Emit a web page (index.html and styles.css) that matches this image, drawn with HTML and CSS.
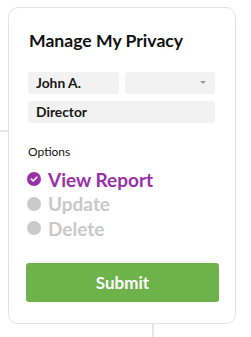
FILE: index.html
```html
<!DOCTYPE html>
<html>
<head>
<meta charset="utf-8">
<link rel="stylesheet" href="styles.css">
</head>
<body>
<div class="line-h"></div>
<div class="card">
  <h1 class="title">Manage My Privacy</h1>
  <div class="fields">
    <div class="row">
      <div class="input">John A.</div>
      <div class="input select"><span class="caret"></span></div>
    </div>
    <div class="input">Director</div>
  </div>
  <div class="label">Options</div>
  <ul class="options">
    <li class="opt active">
      <svg class="ico" viewBox="0 0 14 14" width="14" height="14"><circle cx="7" cy="7" r="7" fill="#9a2fa8"/><path d="M4.3 7.2 L6.2 9 L9.8 5.2" fill="none" stroke="#fff" stroke-width="1.6" stroke-linecap="round" stroke-linejoin="round"/></svg>
      <span>View Report</span>
    </li>
    <li class="opt">
      <svg class="ico" viewBox="0 0 14 14" width="14" height="14"><circle cx="7" cy="7" r="7" fill="#cacaca"/></svg>
      <span>Update</span>
    </li>
    <li class="opt">
      <svg class="ico" viewBox="0 0 14 14" width="14" height="14"><circle cx="7" cy="7" r="7" fill="#cacaca"/></svg>
      <span>Delete</span>
    </li>
  </ul>
  <button class="submit">Submit</button>
</div>
<div class="line-v"></div>
</body>
</html>
```
FILE: styles.css
```css
html, body {
  margin: 0;
  padding: 0;
  background: #fff;
}
body {
  position: relative;
  width: 251px;
  height: 337px;
  overflow: hidden;
  font-family: "Lato", "Noto Sans", sans-serif;
  color: #111;
  padding-top: 7px;
  box-sizing: border-box;
}
.line-h {
  position: absolute;
  left: 0;
  top: 130px;
  width: 10px;
  height: 2px;
  background: #e6e6e6;
}
.line-v {
  position: absolute;
  left: 152px;
  top: 322px;
  width: 2px;
  height: 20px;
  background: #e6e6e6;
}
.card {
  margin-left: 8px;
  width: 228px;
  height: 317px;
  box-sizing: border-box;
  border: 1.5px solid #e3e3e3;
  border-radius: 10px;
  background: #fff;
  padding: 22px 16px 0 18px;
  position: relative;
  z-index: 1;
}
.title {
  margin: 0 0 0 2px;
  font-size: 17.6px;
  line-height: 22px;
  font-weight: 700;
}
.fields {
  margin-top: 20px;
  display: flex;
  flex-direction: column;
  gap: 7px;
  width: 187px;
  margin-left: 1px;
}
.row {
  display: flex;
  gap: 6px;
}
.input {
  height: 22px;
  background: #f2f2f2;
  border-radius: 3px;
  font-size: 13.8px;
  font-weight: 700;
  line-height: 22px;
  padding-left: 8px;
  box-sizing: border-box;
  color: #161616;
}
.row .input {
  flex: 1;
}
.select {
  position: relative;
}
.caret {
  position: absolute;
  right: 9px;
  top: 9px;
  width: 0;
  height: 0;
  border-left: 3.5px solid transparent;
  border-right: 3.5px solid transparent;
  border-top: 3.5px solid #9a9a9a;
}
.label {
  margin-top: 21px;
  font-size: 12px;
  line-height: 16px;
  margin-left: 1px;
}
.options {
  list-style: none;
  margin: 7px 0 0 0;
  padding: 0;
}
.opt {
  display: flex;
  align-items: center;
  gap: 7px;
  height: 24.5px;
  font-size: 19px;
  font-weight: 700;
  color: #c9c9c9;
}
.opt.active {
  color: #9a2fa8;
}
.ico {
  flex: none;
}
.submit {
  display: block;
  margin-top: 22px;
  margin-left: -1px;
  width: 193px;
  height: 39px;
  border: none;
  border-radius: 3px;
  background: #6db24a;
  color: #fff;
  font-family: "Lato", "Noto Sans", sans-serif;
  font-size: 17px;
  font-weight: 700;
}
```
